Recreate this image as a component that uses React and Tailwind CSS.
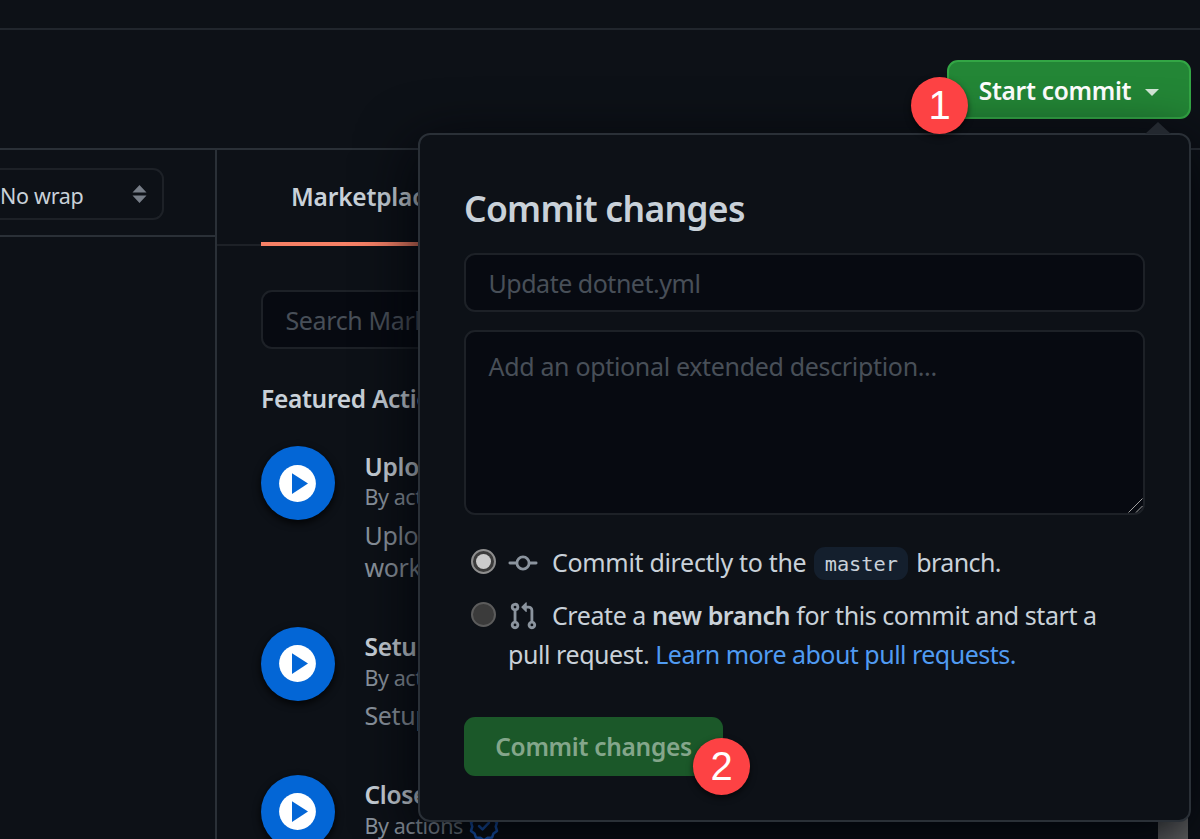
const ACTIONS = [
  { title: "Upload", lines: ["Upload", "workflow"], gap: "h-[180.5px]" },
  { title: "Setup", lines: ["Setup"], gap: "h-[148px]" },
  { title: "Close", lines: [], gap: "h-[100px]" },
];

function Verified() {
  return (
    <svg className="size-[30px] shrink-0" viewBox="0 0 24 24" fill="none" stroke="#1f6feb" strokeWidth="2" strokeLinejoin="round" strokeLinecap="round">
      <path d="M12 1.6l2.9 2 3.5.1 1.2 3.3 2.8 2.1-1 3.4 1 3.4-2.8 2.1-1.2 3.3-3.5.1-2.9 2-2.9-2-3.5-.1-1.2-3.3-2.8-2.1 1-3.4-1-3.4 2.8-2.1 1.2-3.3 3.5-.1z" />
      <path d="M8 12l2.8 2.7 5.2-5.4" />
    </svg>
  );
}

function Action({ item }) {
  return (
    <li className={`flex shrink-0 whitespace-nowrap ${item.gap}`}>
      <span className="mr-[29.5px] flex size-[74px] shrink-0 items-center justify-center rounded-full bg-[#0366d6] shadow-[0_3px_7px_1px_rgba(0,0,0,0.7)]">
        <svg className="-ml-px size-[37px]" viewBox="0 0 37 37">
          <circle cx="18.5" cy="18.5" r="18.4" fill="#fff" />
          <path d="M13 8.3v20.6l16-10.3z" fill="#0366d6" />
        </svg>
      </span>
      <div className="pt-[3.5px]">
        <h4 className="text-[24.5px]/[33px] font-semibold tracking-[-0.3px]">{item.title}</h4>
        <p className="flex h-[30px] items-center gap-[6px] text-[21.5px] tracking-[-0.45px] text-[#8b949e]">
          By actions <Verified />
        </p>
        <div className="pt-[6px] text-[25px]/[32px] tracking-[-0.38px] text-[#8b949e]">
          {item.lines.map((l) => (
            <p key={l}>{l}</p>
          ))}
        </div>
      </div>
    </li>
  );
}

function Step({ n, className }) {
  return (
    <span className={`absolute flex size-[57px] items-center justify-center rounded-full bg-[#fd4244] font-['Liberation_Sans',sans-serif] text-[40px]/[57px] text-white shadow-[0_3px_6px_rgba(0,0,0,0.6)] ${className}`}>
      {n}
    </span>
  );
}

function Popover() {
  return (
    <form className="absolute top-[133px] left-[418px] h-[689px] w-[773px] rounded-[12px] border-2 border-[#2a3037] bg-[#0d1117] pt-[48px] pr-[44px] pl-[44px] shadow-[0_15px_60px_#010409]">
      <svg className="absolute -top-[13px] right-[18px] h-[12px] w-[26px]" viewBox="0 0 26 12">
        <path d="M0 12L13 0l13 12z" fill="#23282f" />
      </svg>
      <h2 className="h-[70px] text-[35.5px]/[51px] font-semibold tracking-[-0.72px]">Commit changes</h2>
      <div className="mb-[18px] h-[59px] w-[681px] rounded-[11px] border-2 border-[#1d2127] bg-[#070a11] px-[22.5px] text-[25px]/[57px] tracking-[-0.48px] text-[#484f58]">
        Update dotnet.yml
      </div>
      <div className="relative h-[185px] w-[681px] rounded-[11px] border-2 border-[#1d2127] bg-[#070a11] px-[22.5px] pt-[15px] text-[25px]/[39px] tracking-[-0.33px] text-[#484f58]">
        Add an optional extended description...
        <svg className="absolute right-0 bottom-0 size-[15px]" viewBox="0 0 15 15" stroke="#a0a0a0" strokeWidth="1">
          <path d="M0.5 14.5l14-14M8 14.5l6.5-6.5" />
        </svg>
      </div>

      <div className="mt-[28px] flex h-[39px] items-center whitespace-nowrap pl-[7px] text-[25px]/[39px] tracking-[-0.32px]">
        <span className="-mt-[3px] mr-[12px] flex size-[25px] items-center justify-center rounded-full border-2 border-[#8e8e8e] bg-[#3b3b3b]">
          <span className="size-[15px] rounded-full bg-[#cbcbcb]" />
        </span>
        <svg className="mr-[14px] h-[30px] w-[30px]" viewBox="0 0 16 16" fill="none" stroke="#8b949e" strokeWidth="1.5" strokeLinecap="round">
          <circle cx="8" cy="8" r="3.25" />
          <path d="M1 8h3.6M11.4 8H15" />
        </svg>
        <span>Commit directly to the</span>
        <code className="mt-[2px] mr-[8px] ml-[8px] flex h-[33px] w-[94px] items-center justify-center rounded-[11px] bg-[#141f2d] pt-[2px] font-['DejaVu_Sans_Mono',monospace] text-[20.3px] tracking-[0px]">master</code>
        <span className="tracking-[-0.6px]">branch.</span>
      </div>

      <div className="mt-[14px] flex whitespace-nowrap pl-[7px] text-[25px]/[39px] tracking-[-0.43px]">
        <span className="mt-[6px] mr-[12px] size-[25px] shrink-0 rounded-full border-2 border-[#5c5c5c] bg-[#3b3b3b]" />
        <div>
          <div className="flex items-center">
            <svg className="mt-[1px] mr-[14px] h-[30px] w-[30px]" viewBox="0 0 16 16" fill="#8b949e">
              <path fillRule="evenodd" d="M7.177 3.073L9.573.677A.25.25 0 0110 .854v4.792a.25.25 0 01-.427.177L7.177 3.427a.25.25 0 010-.354zM3.75 2.5a.75.75 0 100 1.5.75.75 0 000-1.5zm-2.25.75a2.25 2.25 0 113 2.122v5.256a2.251 2.251 0 11-1.5 0V5.372A2.25 2.25 0 011.5 3.25zM11 2.5h-1V4h1a1 1 0 011 1v5.628a2.251 2.251 0 101.5 0V5A2.5 2.5 0 0011 2.5zm1 10.25a.75.75 0 111.5 0 .75.75 0 01-1.5 0zM3.75 12a.75.75 0 100 1.5.75.75 0 000-1.5z" />
            </svg>
            <p>Create a <b className="font-semibold">new branch</b> for this commit and start a</p>
          </div>
          <p>pull request. <a className="tracking-[-0.52px] text-[#509bf2]">Learn more about pull requests.</a></p>
        </div>
      </div>

      <button type="button" className="mt-[43px] h-[59px] w-[259px] rounded-[11px] bg-[#1b5829] pt-[2px] text-[24.5px] font-semibold tracking-[-0.3px] text-[#84a68b]">
        Commit changes
      </button>
      <Step n="2" className="top-[603px] left-[273px]" />
    </form>
  );
}

export default function App() {
  return (
    <div className="relative flex h-[839px] w-[1200px] flex-col overflow-hidden bg-[#0d1117] font-['Noto_Sans',sans-serif] text-[#c9d1d9]">
      <div className="h-[30px] shrink-0 border-b-2 border-[#21262d]" />
      <header className="flex h-[118px] shrink-0 justify-end pt-[30px] pr-[9px]">
        <button className="flex h-[59px] w-[244px] items-center justify-center gap-[14px] rounded-[11px] border-2 border-[#33a645] bg-[#238636] pt-[3px] text-[24.5px] font-semibold tracking-[-0.3px] text-white">
          Start commit
          <svg className="mt-[2px] h-[7px] w-[14px]" viewBox="0 0 14 7"><path d="M0 0h14L7 7z" fill="#d3e7d7" /></svg>
        </button>
      </header>

      <main className="flex min-h-0 flex-1 border-t-2 border-[#2a3037]">
        <section className="w-[217px] shrink-0 border-r-2 border-[#2a3037]">
          <div className="h-[87px] border-b-2 border-[#2a3037] pt-[18px]">
            <div className="flex h-[52px] w-[164px] items-center justify-between rounded-r-[11px] border-2 border-l-0 border-[#1d2127] pr-[15px] text-[21.5px] tracking-[-0.3px]">
              <span className="pt-[4px]">No wrap</span>
              <svg className="-mt-[1px] h-[18px] w-[15px]" viewBox="0 0 15 18" fill="#777e88">
                <path d="M0.5 7.5L7.5 0l7 7.5zM0.5 10.5h14l-7 7.5z" />
              </svg>
            </div>
          </div>
        </section>

        <aside className="flex min-w-0 flex-1 flex-col">
          <div className="flex h-[96px] shrink-0 border-b-2 border-[#1d2127] pl-[44px]">
            <div className="h-[96px] w-[250px] shrink-0 border-b-4 border-[#f78166] pt-[29px] pl-[30px] text-[24.5px]/[36px] font-semibold tracking-[-0.2px]">Marketplace</div>
          </div>
          <div className="flex flex-col pl-[44px]">
            <div className="mt-[44px] h-[59px] w-[500px] shrink-0 rounded-[11px] border-2 border-[#1d2127] bg-[#070a11] pl-[22.5px] text-[25px]/[57px] tracking-[-0.38px] text-[#484f58]">Search Marketplace</div>
            <h3 className="mt-[32px] h-[65px] shrink-0 text-[24.5px]/[35px] font-semibold tracking-[-0.3px]">Featured Actions</h3>
            <ul className="flex flex-col">
              {ACTIONS.map((a) => (
                <Action key={a.title} item={a} />
              ))}
            </ul>
          </div>
        </aside>
        <div className="mr-[12px] w-[30px] shrink-0 bg-[#6b6b6b]" />
      </main>

      <Popover />
      <Step n="1" className="top-[77px] left-[911px]" />
    </div>
  );
}
